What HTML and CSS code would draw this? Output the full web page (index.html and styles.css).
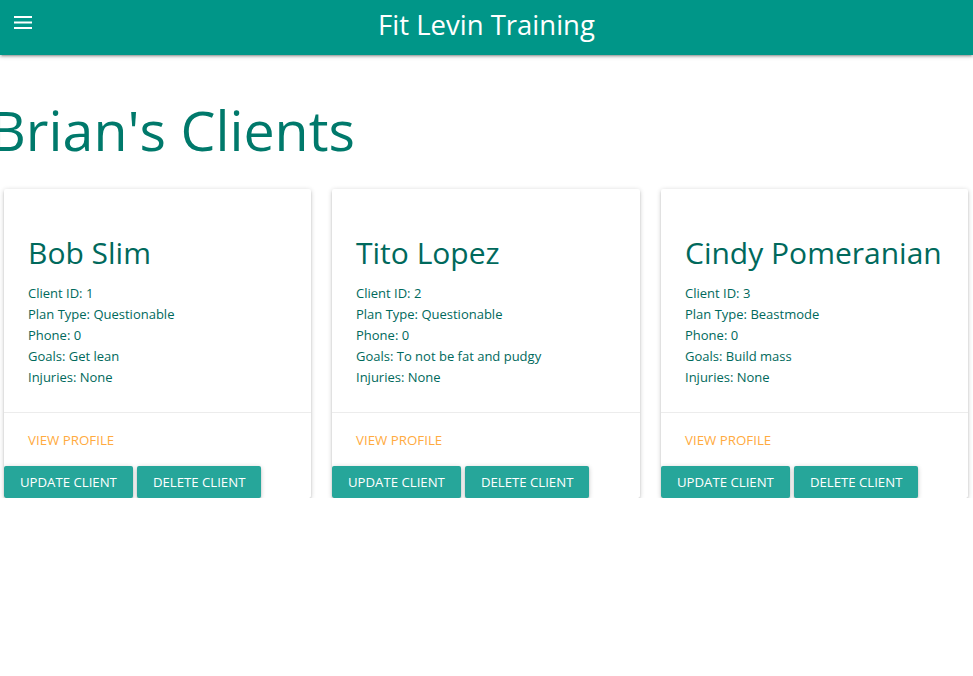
FILE: index.html
```html
<!DOCTYPE html>
<html lang="en">
<head>
<meta charset="utf-8">
<title>Fit Levin Training</title>
<link rel="stylesheet" href="styles.css">
</head>
<body>
<nav class="navbar">
  <button class="menu-btn" aria-label="Menu">
    <svg width="18" height="14" viewBox="0 0 18 14"><rect x="0" y="1" width="18" height="2" fill="#fff"/><rect x="0" y="6.5" width="18" height="2" fill="#fff"/><rect x="0" y="12" width="18" height="2" fill="#fff"/></svg>
  </button>
  <span class="brand">Fit Levin Training</span>
</nav>
<main class="page">
  <h1 class="page-title">Brian's Clients</h1>
  <div class="cards">
    <div class="card">
      <div class="card-content">
        <h2 class="card-name">Bob Slim</h2>
        <p>Client ID: 1</p>
        <p>Plan Type: Questionable</p>
        <p>Phone: 0</p>
        <p>Goals: Get lean</p>
        <p>Injuries: None</p>
      </div>
      <div class="card-action"><a href="#">View Profile</a></div>
      <div class="card-buttons"><button class="btn">Update Client</button><button class="btn">Delete Client</button></div>
    </div>
    <div class="card">
      <div class="card-content">
        <h2 class="card-name">Tito Lopez</h2>
        <p>Client ID: 2</p>
        <p>Plan Type: Questionable</p>
        <p>Phone: 0</p>
        <p>Goals: To not be fat and pudgy</p>
        <p>Injuries: None</p>
      </div>
      <div class="card-action"><a href="#">View Profile</a></div>
      <div class="card-buttons"><button class="btn">Update Client</button><button class="btn">Delete Client</button></div>
    </div>
    <div class="card">
      <div class="card-content">
        <h2 class="card-name">Cindy Pomeranian</h2>
        <p>Client ID: 3</p>
        <p>Plan Type: Beastmode</p>
        <p>Phone: 0</p>
        <p>Goals: Build mass</p>
        <p>Injuries: None</p>
      </div>
      <div class="card-action"><a href="#">View Profile</a></div>
      <div class="card-buttons"><button class="btn">Update Client</button><button class="btn">Delete Client</button></div>
    </div>
  </div>
</main>
</body>
</html>
```

FILE: styles.css
```css
* { box-sizing: border-box; }
html, body { margin: 0; padding: 0; }
body {
  font-family: "Open Sans", "Noto Sans", sans-serif;
  font-size: 14px;
  line-height: 1.5;
  color: rgba(0,0,0,0.87);
  background: #fff;
  overflow: hidden;
}
.navbar {
  height: 55px;
  background: #009688;
  display: flex;
  align-items: center;
  justify-content: center;
  position: relative;
  box-shadow: 0 2px 2px 0 rgba(0,0,0,0.14), 0 3px 1px -2px rgba(0,0,0,0.12), 0 1px 5px 0 rgba(0,0,0,0.2);
}
.menu-btn {
  position: absolute;
  left: 14px;
  top: 15px;
  padding: 0;
  border: 0;
  background: none;
  line-height: 0;
}
.brand {
  color: #fff;
  font-size: 27.5px;
  line-height: 1;
  margin-top: -6px;
}
.page-title {
  margin: 44px 0 0 -10px;
  font-size: 55.5px;
  font-weight: 400;
  line-height: 1.1;
  color: #00796b;
}
.cards {
  display: grid;
  grid-template-columns: 307px 308px 307px;
  column-gap: 21px;
  padding-left: 4px;
  margin-top: 29px;
}
.card {
  background: #fff;
  border-radius: 2px;
  box-shadow: 0 2px 2px 0 rgba(0,0,0,0.14), 0 3px 1px -2px rgba(0,0,0,0.12), 0 1px 5px 0 rgba(0,0,0,0.2);
  overflow: hidden;
}
.card-content {
  padding: 46px 24px 24px;
  color: #00695c;
}
.card-name {
  margin: 0 0 13px;
  font-size: 30px;
  font-weight: 400;
  line-height: 35px;
  white-space: nowrap;
}
.card-content p {
  margin: 0;
  font-size: 13px;
  line-height: 21px;
}
.card-action {
  border-top: 1px solid rgba(160,160,160,0.2);
  padding: 16px 24px 15px;
  line-height: 21px;
}
.card-action a {
  color: #ffab40;
  text-decoration: none;
  text-transform: uppercase;
  font-size: 13.3px;
}
.card-buttons {
  display: flex;
  gap: 4px;
}
.btn {
  height: 32px;
  padding: 0 16px;
  border: 0;
  border-radius: 2px;
  background: #26a69a;
  color: #fff;
  font-family: inherit;
  font-size: 13.2px;
  text-transform: uppercase;
  box-shadow: 0 2px 2px 0 rgba(0,0,0,0.14), 0 3px 1px -2px rgba(0,0,0,0.12), 0 1px 5px 0 rgba(0,0,0,0.2);
}
```
